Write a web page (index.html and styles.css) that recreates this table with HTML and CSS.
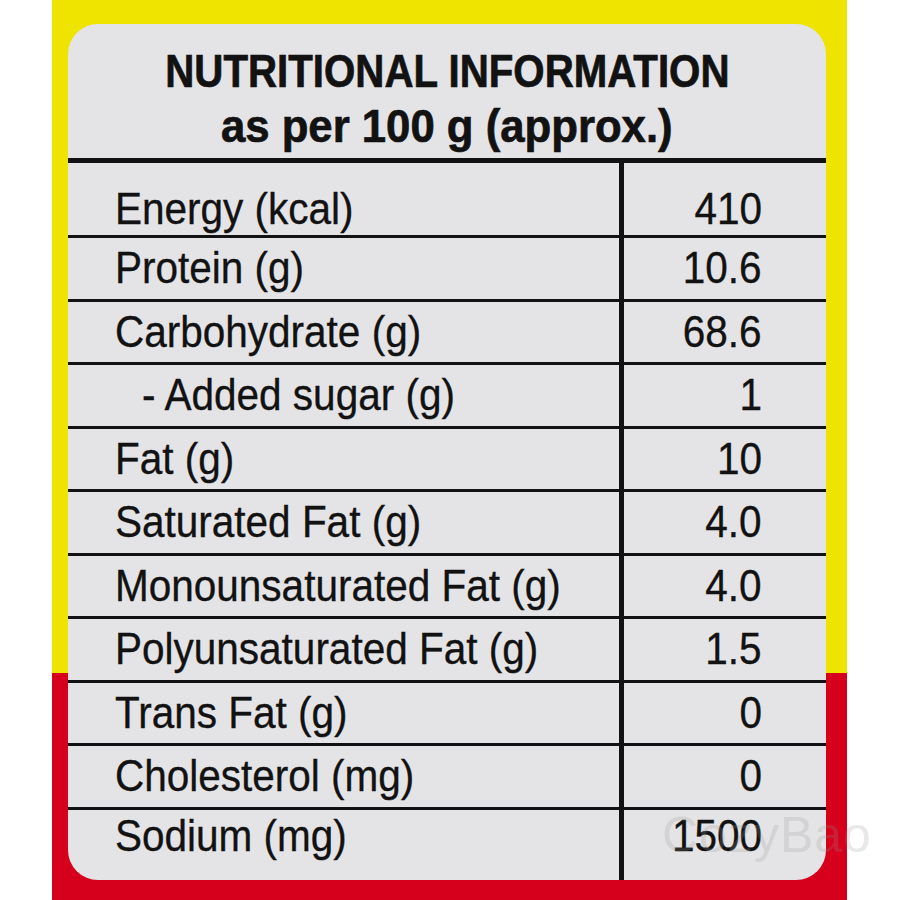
FILE: index.html
```html
<!DOCTYPE html>
<html>
<head>
<meta charset="utf-8">
<link rel="stylesheet" href="styles.css">
</head>
<body>
<div class="panel">
  <div class="card">
    <div class="head">
      <div class="h"><span class="t">NUTRITIONAL INFORMATION</span></div>
      <div class="h h2"><span class="t">as per 100 g (approx.)</span></div>
    </div>
    <div class="table">
      <div class="row first"><div class="name"><span class="t">Energy (kcal)</span></div><div class="val"><span class="t">410</span></div></div>
      <div class="row"><div class="name"><span class="t">Protein (g)</span></div><div class="val"><span class="t">10.6</span></div></div>
      <div class="row"><div class="name"><span class="t">Carbohydrate (g)</span></div><div class="val"><span class="t">68.6</span></div></div>
      <div class="row"><div class="name sub"><span class="t">- Added sugar (g)</span></div><div class="val"><span class="t">1</span></div></div>
      <div class="row"><div class="name"><span class="t">Fat (g)</span></div><div class="val"><span class="t">10</span></div></div>
      <div class="row"><div class="name"><span class="t">Saturated Fat (g)</span></div><div class="val"><span class="t">4.0</span></div></div>
      <div class="row"><div class="name"><span class="t">Monounsaturated Fat (g)</span></div><div class="val"><span class="t">4.0</span></div></div>
      <div class="row"><div class="name"><span class="t">Polyunsaturated Fat (g)</span></div><div class="val"><span class="t">1.5</span></div></div>
      <div class="row"><div class="name"><span class="t">Trans Fat (g)</span></div><div class="val"><span class="t">0</span></div></div>
      <div class="row"><div class="name"><span class="t">Cholesterol (mg)</span></div><div class="val"><span class="t">0</span></div></div>
      <div class="row last"><div class="name"><span class="t">Sodium (mg)</span></div><div class="val"><span class="t">1500</span></div></div>
    </div>
  </div>
  <div class="watermark">CozyBao</div>
</div>
</body>
</html>
```
FILE: styles.css
```css
html, body {
  margin: 0;
  padding: 0;
  background: #ffffff;
}

.panel {
  position: relative;
  margin-left: 52px;
  width: 795px;
  height: 900px;
  box-sizing: border-box;
  padding: 24px 0 0 16px;
  background: linear-gradient(#efe300 0, #efe300 673px, #d6001c 673px, #d6001c 100%);
}

.card {
  width: 758px;
  height: 856px;
  border-radius: 30px;
  background: #e4e4e6;
  overflow: hidden;
  display: flex;
  flex-direction: column;
  font-family: "Liberation Sans", Arial, sans-serif;
  color: #121212;
}

.t {
  display: inline-block;
  transform: scaleX(0.9);
  transform-origin: left center;
  white-space: nowrap;
  -webkit-text-stroke: 0.35px #121212;
}

.head {
  box-sizing: border-box;
  height: 139px;
  border-bottom: 5px solid #121212;
  display: flex;
  flex-direction: column;
  align-items: center;
  padding-top: 20px;
}

.h {
  font-weight: bold;
  font-size: 46px;
  line-height: 55px;
  white-space: nowrap;
  display: flex;
  justify-content: center;
  width: 100%;
}

.h .t {
  transform: scaleX(0.875);
  transform-origin: center center;
  -webkit-text-stroke: 0.7px #121212;
}

.h.h2 .t {
  transform: scaleX(0.95);
}

.table {
  display: flex;
  flex-direction: column;
}

.row {
  display: grid;
  grid-template-columns: 556px 1fr;
}

.row + .row {
  border-top: 3px solid #121212;
}

.name, .val {
  box-sizing: border-box;
  height: 60.5px;
  display: flex;
  align-items: center;
  font-size: 45px;
  white-space: nowrap;
}

.name {
  border-right: 5px solid #121212;
  padding-left: 47px;
}

.name.sub {
  padding-left: 74px;
}

.val {
  justify-content: flex-end;
  padding-right: 64px;
}

.val .t {
  transform-origin: right center;
}

.first .name, .first .val {
  height: 72px;
  padding-top: 20px;
}

.last .name, .last .val {
  height: 70.5px;
  padding-bottom: 18px;
}

.watermark {
  position: absolute;
  left: 610px;
  top: 806px;
  font-family: "Liberation Sans", Arial, sans-serif;
  font-size: 50px;
  color: rgba(150, 150, 150, 0.22);
  white-space: nowrap;
  letter-spacing: 1px;
}
```
